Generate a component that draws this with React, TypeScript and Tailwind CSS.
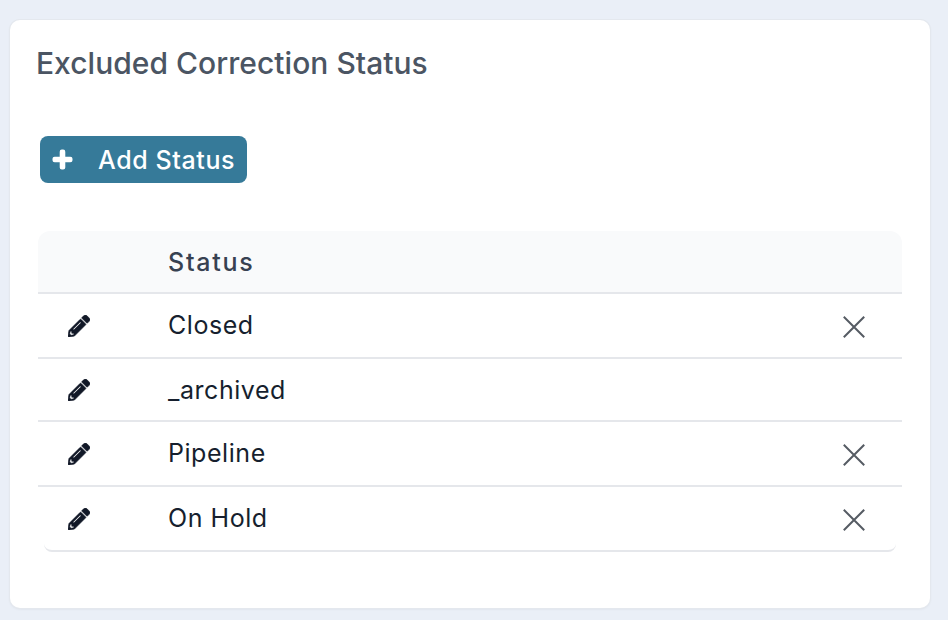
import React from 'react';
import { FaPencilAlt, FaPlus } from 'react-icons/fa';

const statuses = [
    { name: 'Closed', removable: true, height: 'h-[65px]', textPad: '' },
    { name: '_archived', removable: false, height: 'h-[63px]', textPad: 'pt-[2px]' },
    { name: 'Pipeline', removable: true, height: 'h-[65px]', textPad: '' },
];

const CloseIcon = () => (
    <svg width="22" height="22" viewBox="0 0 22 22" fill="none" stroke="#555b63" strokeWidth="2" strokeLinecap="square">
        <path d="M1.5 1.5 L20.5 20.5 M20.5 1.5 L1.5 20.5" />
    </svg>
);

const Row = ({ name, removable, height, textPad, last }: { name: string; removable: boolean; height: string; textPad?: string; last?: boolean }) => (
    <div className={`flex items-center ${height} border-b-2 border-[#e5e7eb] ${last ? 'mx-[6px] rounded-b-lg' : ''}`}>
        <div className={`flex ${last ? 'w-[124px] pl-[24px]' : 'w-[130px] pl-[30px]'} shrink-0 text-[#111827]`}>
            <FaPencilAlt className="w-[22px] h-[22px] shrink-0" stroke="currentColor" strokeWidth={14} />
        </div>
        <div className={`flex-1 text-[25px] leading-none text-[#161f2e] tracking-[0.55px] ${textPad ?? ''}`}>{name}</div>
        {removable && (
            <div className={`flex items-center pt-[2px] ${last ? 'pr-[31px]' : 'pr-[37px]'}`}>
                <CloseIcon />
            </div>
        )}
    </div>
);

const App: React.FC = () => {
    return (
        <div className="w-[948px] h-[620px] overflow-hidden bg-[#eaeff7] pl-[10px] pt-[20px] font-['Inter',sans-serif]">
            <div className="w-[920px] h-[588px] bg-white rounded-[10px] shadow-[0_0_0_1px_#e4e8ee,0_1px_3px_rgba(0,0,0,0.08)] pt-[23px] pl-[26px]">
                <h1 className="text-[30px] leading-[40px] font-[450] tracking-[0.03px] text-[#4b5563]">Excluded Correction Status</h1>
                <button className="mt-[53px] ml-[4px] flex items-center w-[207px] h-[47px] rounded-lg bg-[#367a99] text-white text-[25px] font-[450] tracking-[0.6px]">
                    <FaPlus className="ml-[12px] w-[21px] h-[21px]" stroke="currentColor" strokeWidth={40} />
                    <span className="ml-[25px] pt-[2px]">Add Status</span>
                </button>
                <div className="mt-[48px] ml-[2px] w-[864px]">
                    <div className="flex items-center h-[63px] bg-[#f9fafb] rounded-t-xl border-b-2 border-[#e5e7eb] pl-[130px] pt-[2px] text-[25px] font-[450] tracking-[1.75px] text-[#374151]">
                        Status
                    </div>
                    {statuses.map((s) => (
                        <Row key={s.name} name={s.name} removable={s.removable} height={s.height} textPad={s.textPad} />
                    ))}
                    <Row name="On Hold" removable height="h-[65px]" last />
                </div>
            </div>
        </div>
    );
};

export default App;
